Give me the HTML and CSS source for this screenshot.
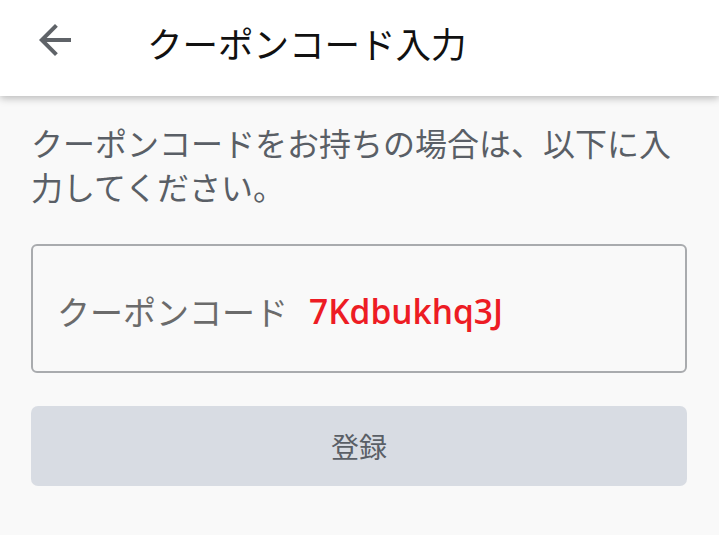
FILE: index.html
```html
<!DOCTYPE html>
<html lang="ja">
<head>
<meta charset="utf-8">
<link rel="stylesheet" href="styles.css">
</head>
<body>
<header class="appbar">
  <button class="back" aria-label="戻る">
    <svg width="48" height="48" viewBox="0 0 24 24"><path d="M20 11H7.83l5.59-5.59L12 4l-8 8 8 8 1.41-1.41L7.83 13H20v-2z" fill="#5f6368"/></svg>
  </button>
  <h1 class="title">クーポンコード入力</h1>
</header>
<main class="content">
  <p class="lead">クーポンコードをお持ちの場合は、以下に入力してください。</p>
  <div class="field">
    <span class="label">クーポンコード</span>
    <span class="code">7Kdbukhq3J</span>
  </div>
  <button class="submit">登録</button>
</main>
</body>
</html>
```
FILE: styles.css
```css
html, body {
  margin: 0;
  padding: 0;
  height: 100%;
  background: #f9f9f9;
  font-family: "Noto Sans CJK JP", "Noto Sans", sans-serif;
}
.appbar {
  height: 96px;
  background: #ffffff;
  display: flex;
  align-items: center;
  box-shadow: 0 2px 8px rgba(0,0,0,0.28);
  position: relative;
}
.back {
  border: 0;
  background: none;
  padding: 0;
  margin-left: 31px;
  margin-top: -16px;
  width: 48px;
  height: 48px;
  display: flex;
}
.title {
  margin: -12px 0 0 68px;
  font-size: 35.5px;
  font-weight: 400;
  color: #111;
  letter-spacing: 0;
}
.content {
  padding: 24px 32px 0 31px;
}
.lead {
  margin: 0;
  font-size: 32px;
  line-height: 44px;
  color: #5a5f66;
}
.field {
  margin-top: 36px;
  border: 2px solid #a9abae;
  border-radius: 6px;
  display: flex;
  align-items: center;
  padding: 5px 0 0 24px;
  box-sizing: border-box;
  height: 129px;
}
.label {
  font-size: 33px;
  color: #6b6b6b;
}
.code {
  margin-left: 21px;
  font-family: "Open Sans", sans-serif;
  font-weight: 600;
  font-size: 33.5px;
  color: #ed1c24;
}
.submit {
  margin-top: 33px;
  width: 100%;
  height: 80px;
  border: 0;
  border-radius: 7px;
  background: #d8dce3;
  font-family: "Noto Sans CJK JP", sans-serif;
  font-size: 28px;
  color: #5a5f66;
  display: block;
}
```
